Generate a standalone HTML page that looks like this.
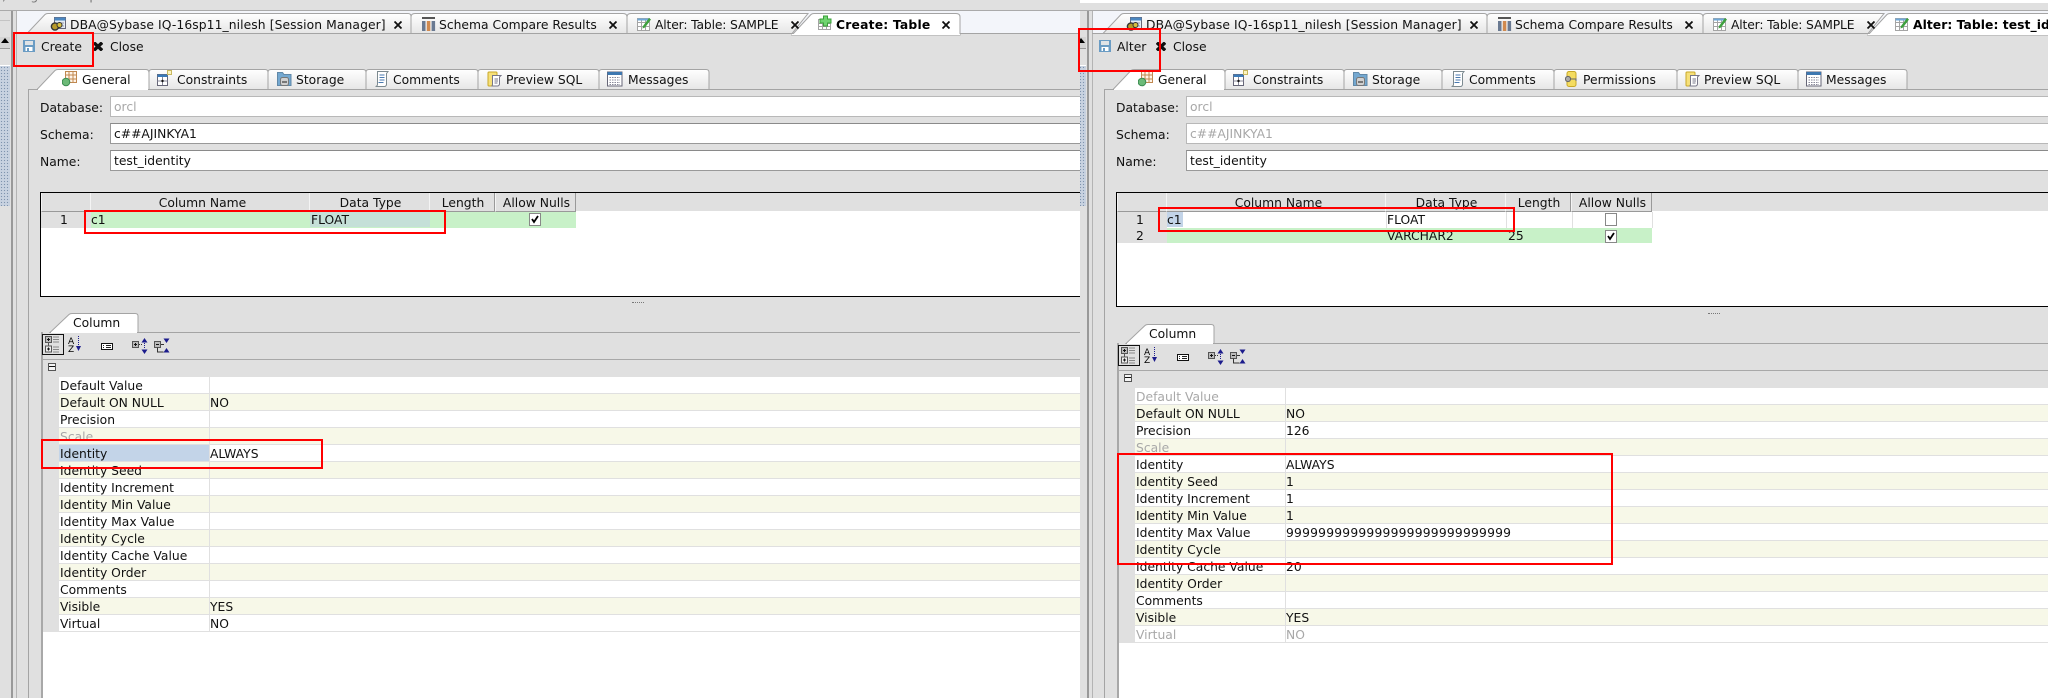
<!DOCTYPE html>
<html>
<head>
<meta charset="utf-8">
<style>
html,body{margin:0;padding:0;width:2048px;height:698px;overflow:hidden;background:#e0e0e0}
body{position:relative;font-family:"DejaVu Sans","Liberation Sans",sans-serif;font-size:12.33px;color:#111}
.pane{position:absolute;top:0;height:698px;overflow:hidden;background:#e0e0e0}
.in{position:absolute;top:0;height:698px;width:1100px}
.a{position:absolute}
.t{position:absolute;line-height:14px;white-space:nowrap}
.b{font-weight:bold;color:#000;letter-spacing:.05px}
.g{color:#a8a8a8}
.f{position:absolute;left:110px;width:1000px;height:19px;background:#fff;border:1px solid #999;border-top-color:#8a8a8a}
.f.d{border-color:#b8b8b8}
.f span{position:absolute;left:3px;top:3px;line-height:14px}
.h{position:absolute;top:193px;height:18px;background:#e0e0e0;border-left:1px solid #f4f4f4;border-right:1px solid #999;border-bottom:1px solid #999;text-align:center;line-height:20px;box-sizing:content-box;text-indent:2px}
.props{position:absolute;left:43px;width:1100px}
.r{display:flex;height:16px;border-bottom:1px solid #e0e0e0;background:#fff;line-height:18px}
.r.o{background:#f7f8e8}
.r i{display:block;width:16px;background:#e0e0e0;margin-bottom:-1px}
.r b{display:block;font-weight:normal;width:151px;padding-left:1px;box-sizing:border-box;border-right:1px solid #e0e0e0;height:16px;white-space:nowrap}
.r u{display:block;text-decoration:none;padding-left:0;white-space:nowrap}
.red{position:absolute;border:2px solid #f00;box-sizing:border-box;z-index:50}
svg{position:absolute;overflow:visible}
.sb{position:absolute;left:0;top:65px;width:10px;height:140px;background-color:#c8d2e0;background-image:radial-gradient(#7f93ad 0.7px,transparent 0.8px);background-size:3px 3px;border-top:1px solid #fff}
</style>
</head>
<body>
<svg width="0" height="0" style="position:absolute">
<defs>
<linearGradient id="tg" x1="0" y1="0" x2="0" y2="1"><stop offset="0" stop-color="#fff"/><stop offset="1" stop-color="#e6e6e6"/></linearGradient>
<symbol id="sess" viewBox="0 0 16 16"><rect x="4.500" y="1.500" width="11" height="11" fill="#e4ecf4" stroke="#667"/><rect x="4.500" y="1.500" width="11" height="3" fill="#4a86c0"/><path d="M7 7h7M7 10h7" stroke="#99a"/><circle cx="5" cy="10.500" r="3.600" fill="#b89a2a" stroke="#333" stroke-width="1.400"/><circle cx="9.500" cy="9" r="2.500" fill="#d8c040" stroke="#333"/></symbol>
<symbol id="cmp" viewBox="0 0 16 16"><rect x="1" y="1" width="13" height="2" fill="#555"/><rect x="1" y="5" width="3.500" height="10" fill="#6a7a92"/><rect x="5.800" y="5" width="3.500" height="10" fill="#d08a50"/><rect x="10.600" y="5" width="3.500" height="10" fill="#6a7a92"/></symbol>
<symbol id="alt" viewBox="0 0 16 16"><rect x="1.500" y="2.500" width="12" height="12" fill="#fff" stroke="#a4a4a4"/><path d="M1.500 6.500h12M1.500 10.500h12M5.500 2.500v12M9.500 2.500v12" stroke="#a4a4a4"/><rect x="1.500" y="2.500" width="12" height="2" fill="#6fa8d8"/><path d="M7 10l6-8 2 1.500-6 8-2.500 1z" fill="#3ea03e"/></symbol>
<symbol id="add" viewBox="0 0 16 16"><rect x="1.500" y="4.500" width="12" height="10" fill="#fff" stroke="#a4a4a4"/><path d="M1.500 8.500h12M1.500 11.500h12M5.500 4.500v10M9.500 4.500v10" stroke="#a4a4a4"/><path d="M6.500 1h4v3h3.500v4h-3.500v3h-4v-3h-3.500v-4h3.500z" fill="#70d470" stroke="#3aa03a"/></symbol>
<symbol id="save" viewBox="0 0 12 12"><rect width="12" height="12" fill="#6a9cc4"/><rect x="2" y="1" width="8" height="4" fill="#dfe3e6"/><rect x="2.500" y="7" width="7" height="4" fill="#fff"/><rect x="4" y="8" width="2" height="3" fill="#6a9cc4"/></symbol>
<symbol id="x" viewBox="0 0 9 8"><path d="M.8 .5L8.200 7.500M8.200 .5L.8 7.500" stroke="#111" stroke-width="3"/></symbol>
<symbol id="tc" viewBox="0 0 8 8"><path d="M.5 .5L7.500 7.500M7.500 .5L.5 7.500" stroke="#111" stroke-width="1.800"/></symbol>
<symbol id="gen" viewBox="0 0 16 16"><rect x="3.500" y="0.500" width="11" height="11" fill="#fff4e8" stroke="#c08850"/><path d="M3.500 4h11M3.500 8h11M7 .5v11M11 .5v11" stroke="#c08850"/><circle cx="4" cy="11" r="3.800" fill="#6cba78" stroke="#3a8a50"/></symbol>
<symbol id="con" viewBox="0 0 16 16"><rect x="0.500" y="4.500" width="10" height="11" fill="#fff" stroke="#667"/><rect x="0.500" y="4.500" width="10" height="2.500" fill="#3a7ab8"/><path d="M5.500 7v8M.5 11h10" stroke="#889"/><circle cx="5.500" cy="11" r="1.200" fill="#111"/><rect x="10.500" y="0.500" width="4" height="4" fill="#fdf4c0" stroke="#c8b860"/></symbol>
<symbol id="stor" viewBox="0 0 16 16"><path d="M.5 1.500h5l1.500 2h7v11h-13.500z" fill="#74a8d0" stroke="#6088a8"/><rect x="3.500" y="6.500" width="8" height="8" rx="2" fill="#d0d0d0" stroke="#777"/><rect x="5" y="10" width="5" height="2" fill="#777"/></symbol>
<symbol id="com" viewBox="0 0 16 16"><path d="M3.500 .5h10.500l-1.500 2v11c0 1-1 2-2 2h-9c1 0 2-1 2-2z" fill="#fff" stroke="#7c8a90"/><path d="M5.500 4h5M5.500 6.500h5M5.500 9h5M4.500 11.500h5" stroke="#4a7ab0"/></symbol>
<symbol id="prev" viewBox="0 0 16 16"><rect x="1" y="1" width="9" height="14" rx="1" fill="#f6e07a" stroke="#c8a828"/><path d="M5.500 4.500h8.500l-1.500 1.500v7c0 1-1 2-2 2h-6c1 0 1-1 1-2z" fill="#fff" stroke="#778"/><path d="M7.500 8h3.500M7.500 10h3.500M7.500 12h3" stroke="#778"/></symbol>
<symbol id="msg" viewBox="0 0 16 16"><rect x="0.500" y="1" width="14.500" height="14" fill="#fff" stroke="#667"/><rect x="0.500" y="1" width="14.500" height="3" fill="#3e78b0"/><path d="M2.500 6.500h10.500M2.500 9h10.500M2.500 11.500h10.500M2.500 13.500h10.500" stroke="#8a8a9a" stroke-dasharray="1.500 1"/></symbol>
<symbol id="perm" viewBox="0 0 12 16"><rect x="2" y="0.500" width="9" height="15" rx="2" fill="#f4dc60" stroke="#c8a828"/><circle cx="3" cy="8" r="2.600" fill="#aaa" stroke="#666"/><path d="M5 8h6v2" stroke="#666" fill="none"/></symbol>
<symbol id="ic1" viewBox="0 0 22 21"><rect x="0.500" y="0.500" width="21" height="20" fill="none" stroke="#111"/><rect x="3.500" y="2.500" width="6" height="6" fill="#bbb" stroke="#555"/><path d="M5 5.500h3M6.500 4v3" stroke="#111"/><path d="M11 3h6M11 5.500h6M11 8h6" stroke="#888"/><rect x="3.500" y="12" width="6" height="6" fill="#eee" stroke="#555"/><path d="M5 15h3M6.500 13.500v3" stroke="#111"/><path d="M11 13h6M11 15.500h6M11 18h6" stroke="#888"/><path d="M6.500 8.500v3.500" stroke="#555"/></symbol>
<symbol id="ic4" viewBox="0 0 16 16"><rect x="0.500" y="3.500" width="6" height="6" fill="#bbb" stroke="#555"/><path d="M2 6.500h3M3.500 5v3" stroke="#111"/><path d="M7 6.500h3" stroke="#333" stroke-dasharray="1 1"/><path d="M12.500 0l-3 4.500h6zM12.500 16l-3-4.500h6z" fill="#1c1c8c"/><path d="M12.500 5v6" stroke="#1c1c8c" stroke-dasharray="1 1"/></symbol>
<symbol id="ic5" viewBox="0 0 16 16"><rect x="0.500" y="3.500" width="6" height="6" fill="#bbb" stroke="#555"/><path d="M2 6.500h3" stroke="#111"/><path d="M7 6.500h3M3.500 9.500v4.500h6" stroke="#333" fill="none"/><path d="M12.500 5l-3-4.500h6zM12.500 10l-3 4.500h6z" fill="#1c1c8c"/></symbol>
</defs>
</svg>

<!-- top strip -->
<div class="t" style="left:-3px;top:-11px;color:#777;z-index:2">r, drag and drop here to create a shortcut ..</div>
<div class="a" style="left:1080px;top:0;width:968px;height:3px;background:#fff;z-index:2"></div>

<!-- LEFT PANE -->
<div class="pane" style="left:0;width:1080px">
<div class="in" style="left:0">
  <div class="a" style="left:0;top:10px;width:1100px;height:1px;background:#aaa"></div>
  <div class="a" style="left:16px;top:11px;width:1100px;height:22px;background:#f3f5fa"></div>
  <div class="a" style="left:0;top:20px;width:10px;height:1px;background:#c4c4c4"></div>
  <div class="a" style="left:0;top:37px;width:10px;height:11px;background:#d4d4d4;border-bottom:1px solid #999"></div>
  <svg style="left:1px;top:38px" width="8" height="6"><path d="M4 0L8 5H0z" fill="#000"/></svg>
  <div class="sb"></div>
  <div class="a" style="left:11px;top:11px;width:1.500px;height:687px;background:#999"></div>
  <div class="a" style="left:16px;top:11px;width:1px;height:687px;background:#b4b4b4"></div>
  <div class="a" style="left:28px;top:89px;width:1px;height:609px;background:#a4a4a4"></div>

  <svg style="left:0;top:0" width="1100" height="35">
    <path d="M16 33.500H1100" stroke="#a4a4a4" fill="none"/>
    <path d="M27 33.500L45 14.500Q46 13.500 48 13.500H408Q411 13.500 411 16.500V33.500Z" fill="url(#tg)" stroke="#a4a4a4"/>
    <path d="M411 33.500V17Q411 13.500 415 13.500H623Q627 13.500 627 17V33.500Z" fill="url(#tg)" stroke="#a4a4a4"/>
    <path d="M627 33.500V17Q627 13.500 631 13.500H808L792 33.500Z" fill="url(#tg)" stroke="#a4a4a4"/>
    <path d="M792 35L811 14.500Q812 13.500 814 13.500H956Q960 13.500 960 17V35Z" fill="#fff" stroke="#a4a4a4"/>
    <path d="M792 34.500H960" stroke="#fff"/>
    <path d="M961 33.500H1100" stroke="#a4a4a4"/>
  </svg>
  <svg style="left:50px;top:16px" width="16" height="16"><use href="#sess"/></svg>
  <div class="t" style="left:70px;top:18px;letter-spacing:.08px">DBA@Sybase IQ-16sp11_nilesh [Session Manager]</div>
  <svg style="left:394px;top:21px" width="8" height="8"><use href="#tc"/></svg>
  <svg style="left:421px;top:16px" width="16" height="16"><use href="#cmp"/></svg>
  <div class="t" style="left:439px;top:18px">Schema Compare Results</div>
  <svg style="left:609px;top:21px" width="8" height="8"><use href="#tc"/></svg>
  <svg style="left:636px;top:16px" width="16" height="16"><use href="#alt"/></svg>
  <div class="t" style="left:655px;top:18px;letter-spacing:-.15px">Alter: Table: SAMPLE</div>
  <svg style="left:791px;top:21px" width="8" height="8"><use href="#tc"/></svg>
  <svg style="left:817px;top:15px" width="16" height="16"><use href="#add"/></svg>
  <div class="t b" style="left:836px;top:18px;letter-spacing:.2px">Create: Table</div>
  <svg style="left:942px;top:21px" width="8" height="8"><use href="#tc"/></svg>

  <svg style="left:23px;top:40px" width="12" height="12"><use href="#save"/></svg>
  <div class="t" style="left:41px;top:40px">Create</div>
  <svg style="left:93px;top:42px" width="10" height="9"><use href="#x"/></svg>
  <div class="t" style="left:110px;top:40px">Close</div>

  <svg style="left:0;top:60px" width="1100" height="32">
    <path d="M29 29.500H1100" stroke="#a4a4a4" fill="none"/>
    <path d="M149 29.500V13Q149 9.500 146 9.500H58Q56 9.500 55 10.500L37 29.500Z" fill="#fff" stroke="#a4a4a4"/>
    <path d="M38 29.500H148" stroke="#fff"/>
    <path d="M149 29.500V12.500Q149 9.500 152 9.500H265Q268 9.500 268 12.500V29.500Z" fill="url(#tg)" stroke="#a4a4a4"/>
    <path d="M268 29.500V12.500Q268 9.500 271 9.500H363Q366 9.500 366 12.500V29.500Z" fill="url(#tg)" stroke="#a4a4a4"/>
    <path d="M366 29.500V12.500Q366 9.500 369 9.500H475Q478 9.500 478 12.500V29.500Z" fill="url(#tg)" stroke="#a4a4a4"/>
    <path d="M478 29.500V12.500Q478 9.500 481 9.500H596Q599 9.500 599 12.500V29.500Z" fill="url(#tg)" stroke="#a4a4a4"/>
    <path d="M599 29.500V12.500Q599 9.500 602 9.500H706Q709 9.500 709 12.500V29.500Z" fill="url(#tg)" stroke="#a4a4a4"/>
  </svg>
  <svg style="left:62px;top:71px" width="16" height="16"><use href="#gen"/></svg>
  <div class="t" style="left:82px;top:73px">General</div>
  <svg style="left:157px;top:70px" width="16" height="16"><use href="#con"/></svg>
  <div class="t" style="left:177px;top:73px">Constraints</div>
  <svg style="left:277px;top:71px" width="16" height="16"><use href="#stor"/></svg>
  <div class="t" style="left:296px;top:73px">Storage</div>
  <svg style="left:374px;top:71px" width="16" height="16"><use href="#com"/></svg>
  <div class="t" style="left:393px;top:73px">Comments</div>
  <svg style="left:487px;top:71px" width="16" height="16"><use href="#prev"/></svg>
  <div class="t" style="left:506px;top:73px">Preview SQL</div>
  <svg style="left:607px;top:71px" width="16" height="16"><use href="#msg"/></svg>
  <div class="t" style="left:628px;top:73px">Messages</div>

  <div class="t" style="left:40px;top:101px">Database:</div>
  <div class="f d" style="top:96px"><span class="g">orcl</span></div>
  <div class="t" style="left:40px;top:128px">Schema:</div>
  <div class="f" style="top:123px"><span>c##AJINKYA1</span></div>
  <div class="t" style="left:40px;top:155px">Name:</div>
  <div class="f" style="top:150px"><span>test_identity</span></div>

  <div class="a" style="left:40px;top:192px;width:1100px;height:103px;background:#fff;border:1px solid #000"></div>
  <div class="a" style="left:41px;top:193px;width:1100px;height:18px;background:#e0e0e0"></div>
  <div class="h" style="left:41px;width:48px"></div>
  <div class="h" style="left:90px;width:218px;text-indent:5px">Column Name</div>
  <div class="h" style="left:309px;width:119px">Data Type</div>
  <div class="h" style="left:429px;width:64px">Length</div>
  <div class="h" style="left:495px;width:79px">Allow Nulls</div>
  <div class="a" style="left:41px;top:212px;width:50px;height:16px;background:#e0e0e0"></div>
  <div class="a" style="left:91px;top:212px;width:485px;height:16px;background:#c8f1c8"></div>
  <div class="a" style="left:310px;top:212px;width:120px;height:15px;background:#c5e0d8"></div>
  <div class="t" style="left:60px;top:213px">1</div>
  <div class="t" style="left:91px;top:213px">c1</div>
  <div class="t" style="left:311px;top:213px">FLOAT</div>
  <div class="a" style="left:529px;top:213px;width:10px;height:11px;background:#fff;border:1px solid #888"></div>
  <svg style="left:531px;top:215px" width="8" height="8"><path d="M1 4L3 7L7 1" fill="none" stroke="#000" stroke-width="1.800"/></svg>
  <div class="a" style="left:632px;top:302px;width:12px;height:0;border-top:1px dotted #777"></div>

  <svg style="left:40px;top:310px" width="1100" height="24">
    <path d="M98 22.500V6Q98 3.500 95 3.500H32Q30 3.500 29 4.500L10 22.500Z" fill="#fff" stroke="#a4a4a4"/>
    <path d="M98 22.500H1100" stroke="#a4a4a4"/>
    <path d="M11 22.500H97" stroke="#fff"/>
  </svg>
  <div class="t" style="left:73px;top:316px">Column</div>
  <div class="a" style="left:41px;top:332px;width:2px;height:366px;background:#a8a8a8"></div>
  <svg style="left:42px;top:334px" width="22" height="21"><use href="#ic1"/></svg>
  <svg style="left:68px;top:336px" width="16" height="18"><text x="0" y="8" font-family="DejaVu Sans" font-size="9" fill="#000">A</text><text x="0" y="16" font-family="DejaVu Sans" font-size="9" fill="#000">Z</text><path d="M10.500 0v10" stroke="#1c1c8c" stroke-dasharray="1 1"/><path d="M8 10h5l-2.500 5z" fill="#1c1c8c"/></svg>
  <svg style="left:101px;top:343px" width="13" height="8"><rect x="0.500" y="0.500" width="11" height="6" fill="#fff" stroke="#111"/><path d="M2 2.500h1M5 2.500h5M2 4.500h1M5 4.500h5" stroke="#222"/></svg>
  <svg style="left:132px;top:338px" width="16" height="16"><use href="#ic4"/></svg>
  <svg style="left:154px;top:338px" width="16" height="16"><use href="#ic5"/></svg>
  <div class="a" style="left:43px;top:359px;width:1100px;height:1px;background:#a8a8a8"></div>
  <div class="a" style="left:48px;top:363px;width:6px;height:6px;background:#f4f4f4;border:1px solid #555"></div>
  <div class="a" style="left:49px;top:366px;width:6px;height:1px;background:#111"></div>

  <div class="a" style="left:43px;top:632px;width:1100px;height:66px;background:#fff"></div>
  <div class="props" style="top:377px">
    <div class="r"><i></i><b>Default Value</b><u></u></div>
    <div class="r o"><i></i><b>Default ON NULL</b><u>NO</u></div>
    <div class="r"><i></i><b>Precision</b><u></u></div>
    <div class="r o"><i></i><b class="g">Scale</b><u></u></div>
    <div class="r"><i></i><b style="background:#c3d4e8">Identity</b><u>ALWAYS</u></div>
    <div class="r o"><i></i><b>Identity Seed</b><u></u></div>
    <div class="r"><i></i><b>Identity Increment</b><u></u></div>
    <div class="r o"><i></i><b>Identity Min Value</b><u></u></div>
    <div class="r"><i></i><b>Identity Max Value</b><u></u></div>
    <div class="r o"><i></i><b>Identity Cycle</b><u></u></div>
    <div class="r"><i></i><b>Identity Cache Value</b><u></u></div>
    <div class="r o"><i></i><b>Identity Order</b><u></u></div>
    <div class="r"><i></i><b>Comments</b><u></u></div>
    <div class="r o"><i></i><b>Visible</b><u>YES</u></div>
    <div class="r"><i></i><b>Virtual</b><u>NO</u></div>
  </div>
</div>
</div>

<!-- RIGHT PANE -->
<div class="pane" style="left:1080px;width:968px">
<div class="in" style="left:-4px">
  <div class="a" style="left:0;top:10px;width:1100px;height:1px;background:#aaa"></div>
  <div class="a" style="left:16px;top:11px;width:1100px;height:22px;background:#f3f5fa"></div>
  <div class="a" style="left:0;top:37px;width:10px;height:11px;background:#d4d4d4;border-bottom:1px solid #999"></div>
  <svg style="left:1px;top:38px" width="8" height="6"><path d="M4 0L8 5H0z" fill="#000"/></svg>
  <div class="sb"></div>
  <div class="a" style="left:11px;top:11px;width:1.500px;height:687px;background:#999"></div>
  <div class="a" style="left:16px;top:11px;width:1px;height:687px;background:#b4b4b4"></div>
  <div class="a" style="left:28px;top:89px;width:1px;height:609px;background:#a4a4a4"></div>

  <svg style="left:0;top:0" width="1100" height="35">
    <path d="M16 33.500H1100" stroke="#a4a4a4" fill="none"/>
    <path d="M27 33.500L45 14.500Q46 13.500 48 13.500H408Q411 13.500 411 16.500V33.500Z" fill="url(#tg)" stroke="#a4a4a4"/>
    <path d="M411 33.500V17Q411 13.500 415 13.500H623Q627 13.500 627 17V33.500Z" fill="url(#tg)" stroke="#a4a4a4"/>
    <path d="M627 33.500V17Q627 13.500 631 13.500H808L792 33.500Z" fill="url(#tg)" stroke="#a4a4a4"/>
    <path d="M792 35L811 14.500Q812 13.500 814 13.500H1100V35Z" fill="#fff" stroke="#a4a4a4"/>
    <path d="M792 34.500H1100" stroke="#fff"/>
  </svg>
  <svg style="left:50px;top:16px" width="16" height="16"><use href="#sess"/></svg>
  <div class="t" style="left:70px;top:18px;letter-spacing:.08px">DBA@Sybase IQ-16sp11_nilesh [Session Manager]</div>
  <svg style="left:394px;top:21px" width="8" height="8"><use href="#tc"/></svg>
  <svg style="left:421px;top:16px" width="16" height="16"><use href="#cmp"/></svg>
  <div class="t" style="left:439px;top:18px">Schema Compare Results</div>
  <svg style="left:609px;top:21px" width="8" height="8"><use href="#tc"/></svg>
  <svg style="left:636px;top:16px" width="16" height="16"><use href="#alt"/></svg>
  <div class="t" style="left:655px;top:18px;letter-spacing:-.15px">Alter: Table: SAMPLE</div>
  <svg style="left:791px;top:21px" width="8" height="8"><use href="#tc"/></svg>
  <svg style="left:818px;top:16px" width="16" height="16"><use href="#alt"/></svg>
  <div class="t b" style="left:837px;top:18px">Alter: Table: test_identity</div>

  <svg style="left:23px;top:40px" width="12" height="12"><use href="#save"/></svg>
  <div class="t" style="left:41px;top:40px">Alter</div>
  <svg style="left:80px;top:42px" width="10" height="9"><use href="#x"/></svg>
  <div class="t" style="left:97px;top:40px">Close</div>

  <svg style="left:0;top:60px" width="1100" height="32">
    <path d="M29 29.500H1100" stroke="#a4a4a4" fill="none"/>
    <path d="M149 29.500V13Q149 9.500 146 9.500H58Q56 9.500 55 10.500L37 29.500Z" fill="#fff" stroke="#a4a4a4"/>
    <path d="M38 29.500H148" stroke="#fff"/>
    <path d="M149 29.500V12.500Q149 9.500 152 9.500H265Q268 9.500 268 12.500V29.500Z" fill="url(#tg)" stroke="#a4a4a4"/>
    <path d="M268 29.500V12.500Q268 9.500 271 9.500H363Q366 9.500 366 12.500V29.500Z" fill="url(#tg)" stroke="#a4a4a4"/>
    <path d="M366 29.500V12.500Q366 9.500 369 9.500H475Q478 9.500 478 12.500V29.500Z" fill="url(#tg)" stroke="#a4a4a4"/>
    <path d="M478 29.500V12.500Q478 9.500 481 9.500H598Q601 9.500 601 12.500V29.500Z" fill="url(#tg)" stroke="#a4a4a4"/>
    <path d="M601 29.500V12.500Q601 9.500 604 9.500H719Q722 9.500 722 12.500V29.500Z" fill="url(#tg)" stroke="#a4a4a4"/>
    <path d="M722 29.500V12.500Q722 9.500 725 9.500H828Q831 9.500 831 12.500V29.500Z" fill="url(#tg)" stroke="#a4a4a4"/>
  </svg>
  <svg style="left:62px;top:71px" width="16" height="16"><use href="#gen"/></svg>
  <div class="t" style="left:82px;top:73px">General</div>
  <svg style="left:157px;top:70px" width="16" height="16"><use href="#con"/></svg>
  <div class="t" style="left:177px;top:73px">Constraints</div>
  <svg style="left:277px;top:71px" width="16" height="16"><use href="#stor"/></svg>
  <div class="t" style="left:296px;top:73px">Storage</div>
  <svg style="left:374px;top:71px" width="16" height="16"><use href="#com"/></svg>
  <div class="t" style="left:393px;top:73px">Comments</div>
  <svg style="left:489px;top:71px" width="12" height="16"><use href="#perm"/></svg>
  <div class="t" style="left:507px;top:73px">Permissions</div>
  <svg style="left:609px;top:71px" width="16" height="16"><use href="#prev"/></svg>
  <div class="t" style="left:628px;top:73px">Preview SQL</div>
  <svg style="left:730px;top:71px" width="16" height="16"><use href="#msg"/></svg>
  <div class="t" style="left:750px;top:73px">Messages</div>

  <div class="t" style="left:40px;top:101px">Database:</div>
  <div class="f d" style="top:96px"><span class="g">orcl</span></div>
  <div class="t" style="left:40px;top:128px">Schema:</div>
  <div class="f d" style="top:123px"><span class="g">c##AJINKYA1</span></div>
  <div class="t" style="left:40px;top:155px">Name:</div>
  <div class="f" style="top:150px"><span>test_identity</span></div>

  <div class="a" style="left:40px;top:192px;width:1100px;height:113px;background:#fff;border:1px solid #000"></div>
  <div class="a" style="left:41px;top:193px;width:1100px;height:18px;background:#e0e0e0"></div>
  <div class="h" style="left:41px;width:48px"></div>
  <div class="h" style="left:90px;width:218px;text-indent:5px">Column Name</div>
  <div class="h" style="left:309px;width:119px">Data Type</div>
  <div class="h" style="left:429px;width:64px">Length</div>
  <div class="h" style="left:495px;width:79px">Allow Nulls</div>
  <div class="a" style="left:41px;top:212px;width:50px;height:31px;background:#e0e0e0"></div>
  <div class="a" style="left:91px;top:212px;width:16px;height:15px;background:#c3d4e8"></div>
  <div class="a" style="left:310px;top:212px;width:1px;height:16px;background:#e0e0e0"></div>
  <div class="a" style="left:430px;top:212px;width:1px;height:16px;background:#e0e0e0"></div>
  <div class="a" style="left:496px;top:212px;width:1px;height:16px;background:#e0e0e0"></div>
  <div class="a" style="left:576px;top:212px;width:1px;height:16px;background:#e0e0e0"></div>
  <div class="a" style="left:91px;top:228px;width:485px;height:15px;background:#c8f1c8"></div>
  <div class="t" style="left:60px;top:213px">1</div>
  <div class="t" style="left:60px;top:229px">2</div>
  <div class="t" style="left:91px;top:213px">c1</div>
  <div class="t" style="left:311px;top:213px">FLOAT</div>
  <div class="t" style="left:311px;top:229px">VARCHAR2</div>
  <div class="t" style="left:432px;top:229px">25</div>
  <div class="a" style="left:529px;top:213px;width:10px;height:11px;background:#fff;border:1px solid #888"></div>
  <div class="a" style="left:529px;top:230px;width:10px;height:11px;background:#fff;border:1px solid #888"></div>
  <svg style="left:531px;top:232px" width="8" height="8"><path d="M1 4L3 7L7 1" fill="none" stroke="#000" stroke-width="1.800"/></svg>
  <div class="a" style="left:632px;top:313px;width:12px;height:0;border-top:1px dotted #777"></div>

  <svg style="left:40px;top:321px" width="1100" height="24">
    <path d="M98 22.500V6Q98 3.500 95 3.500H32Q30 3.500 29 4.500L10 22.500Z" fill="#fff" stroke="#a4a4a4"/>
    <path d="M98 22.500H1100" stroke="#a4a4a4"/>
    <path d="M11 22.500H97" stroke="#fff"/>
  </svg>
  <div class="t" style="left:73px;top:327px">Column</div>
  <div class="a" style="left:41px;top:343px;width:2px;height:355px;background:#a8a8a8"></div>
  <svg style="left:42px;top:345px" width="22" height="21"><use href="#ic1"/></svg>
  <svg style="left:68px;top:347px" width="16" height="18"><text x="0" y="8" font-family="DejaVu Sans" font-size="9" fill="#000">A</text><text x="0" y="16" font-family="DejaVu Sans" font-size="9" fill="#000">Z</text><path d="M10.500 0v10" stroke="#1c1c8c" stroke-dasharray="1 1"/><path d="M8 10h5l-2.500 5z" fill="#1c1c8c"/></svg>
  <svg style="left:101px;top:354px" width="13" height="8"><rect x="0.500" y="0.500" width="11" height="6" fill="#fff" stroke="#111"/><path d="M2 2.500h1M5 2.500h5M2 4.500h1M5 4.500h5" stroke="#222"/></svg>
  <svg style="left:132px;top:349px" width="16" height="16"><use href="#ic4"/></svg>
  <svg style="left:154px;top:349px" width="16" height="16"><use href="#ic5"/></svg>
  <div class="a" style="left:43px;top:370px;width:1100px;height:1px;background:#a8a8a8"></div>
  <div class="a" style="left:48px;top:374px;width:6px;height:6px;background:#f4f4f4;border:1px solid #555"></div>
  <div class="a" style="left:49px;top:377px;width:6px;height:1px;background:#111"></div>

  <div class="a" style="left:43px;top:643px;width:1100px;height:55px;background:#fff"></div>
  <div class="props" style="top:388px">
    <div class="r"><i></i><b class="g">Default Value</b><u></u></div>
    <div class="r o"><i></i><b>Default ON NULL</b><u>NO</u></div>
    <div class="r"><i></i><b>Precision</b><u>126</u></div>
    <div class="r o"><i></i><b class="g">Scale</b><u></u></div>
    <div class="r"><i></i><b>Identity</b><u>ALWAYS</u></div>
    <div class="r o"><i></i><b>Identity Seed</b><u>1</u></div>
    <div class="r"><i></i><b>Identity Increment</b><u>1</u></div>
    <div class="r o"><i></i><b>Identity Min Value</b><u>1</u></div>
    <div class="r"><i></i><b>Identity Max Value</b><u style="letter-spacing:.2px">9999999999999999999999999999</u></div>
    <div class="r o"><i></i><b>Identity Cycle</b><u></u></div>
    <div class="r"><i></i><b>Identity Cache Value</b><u>20</u></div>
    <div class="r o"><i></i><b>Identity Order</b><u></u></div>
    <div class="r"><i></i><b>Comments</b><u></u></div>
    <div class="r o"><i></i><b>Visible</b><u>YES</u></div>
    <div class="r"><i></i><b class="g">Virtual</b><u class="g">NO</u></div>
  </div>
</div>
</div>

<!-- red annotation rectangles -->
<div class="red" style="left:13px;top:32px;width:81px;height:35px"></div>
<div class="red" style="left:84px;top:210px;width:362px;height:24px"></div>
<div class="red" style="left:41px;top:439px;width:282px;height:30px"></div>
<div class="red" style="left:1078px;top:28px;width:83px;height:44px"></div>
<div class="red" style="left:1158px;top:207px;width:357px;height:25px"></div>
<div class="red" style="left:1117px;top:453px;width:496px;height:112px"></div>
</body>
</html>
